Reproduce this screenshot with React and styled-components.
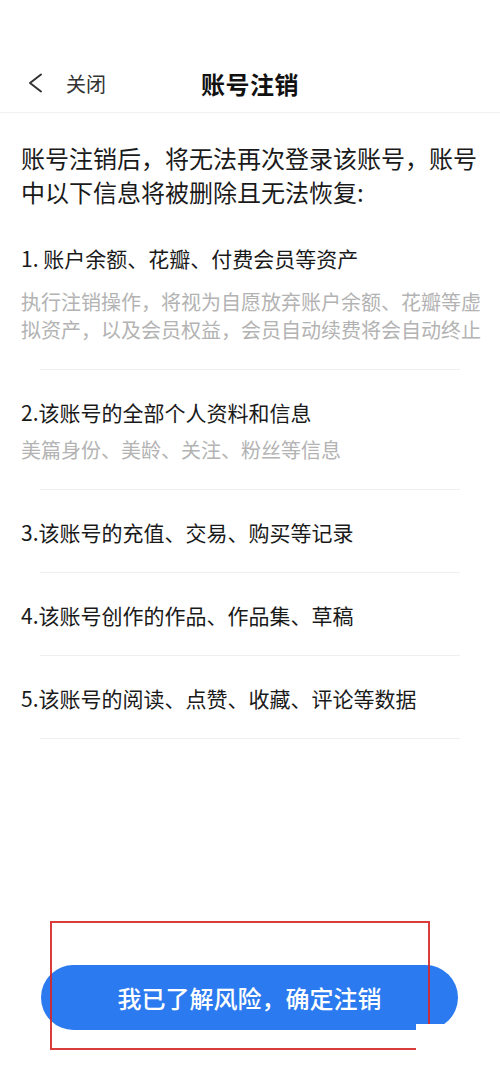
import React from "react"
import styled, { createGlobalStyle } from "styled-components"

const GlobalStyle = createGlobalStyle`
  html, body {
    margin: 0;
    padding: 0;
    background: #fff;
  }
  body {
    font-family: "Noto Sans CJK SC", "Noto Sans", sans-serif;
    color: #222;
  }
`

const Page = styled.div`
  position: relative;
  width: 500px;
  height: 1084px;
  padding-top: 54px;
  box-sizing: border-box;
  display: flex;
  flex-direction: column;
  overflow: hidden;
`

const Header = styled.header`
  height: 58px;
  display: grid;
  grid-template-columns: 1fr auto 1fr;
  align-items: center;
  border-bottom: 1px solid #f1f1f1;
`

const Back = styled.div`
  display: flex;
  align-items: center;
  gap: 22px;
  padding-left: 28px;
  font-size: 20px;
  color: #333;
`

const Title = styled.h1`
  margin: 0;
  font-size: 24px;
  font-weight: 700;
  color: #111;
  letter-spacing: 0.5px;
`

const Intro = styled.p`
  margin: 28px 18px 34px 21px;
  font-size: 24px;
  line-height: 34px;
  color: #1a1a1a;
`

const Item = styled.section`
  padding: ${p => (p.first ? "0" : "27px")} 18px 25px 21px;
`

const ItemTitle = styled.div`
  font-size: 21px;
  line-height: 30px;
  color: #1a1a1a;
`

const ItemDesc = styled.div`
  margin-top: ${p => p.gap}px;
  font-size: 20px;
  line-height: 28px;
  color: #b3b3b3;
`

const Divider = styled.div`
  height: 1px;
  margin: 0 40px;
  background: #efefef;
`

const Footer = styled.footer`
  position: relative;
  margin-top: auto;
  padding: 0 42px 54px 41px;
`

const Confirm = styled.button`
  width: 100%;
  height: 65px;
  border: none;
  border-radius: 33px;
  background: #2b7af0;
  color: #fff;
  font-family: inherit;
  font-size: 24px;
  font-weight: 500;
`

const Frame = styled.div`
  position: absolute;
  left: 50px;
  top: -44px;
  width: 380px;
  height: 129px;
  box-sizing: border-box;
  border: 2px solid rgba(214, 38, 38, 0.9);
  pointer-events: none;
`

const Patch = styled.div`
  position: absolute;
  left: 416px;
  top: 59px;
  width: 32px;
  height: 40px;
  background: #fff;
`

const items = [
  {
    title: "1. 账户余额、花瓣、付费会员等资产",
    desc: "执行注销操作，将视为自愿放弃账户余额、花瓣等虚拟资产，以及会员权益，会员自动续费将会自动终止",
    gap: 15,
  },
  {
    title: "2.该账号的全部个人资料和信息",
    desc: "美篇身份、美龄、关注、粉丝等信息",
    gap: 9,
  },
  { title: "3.该账号的充值、交易、购买等记录" },
  { title: "4.该账号创作的作品、作品集、草稿" },
  { title: "5.该账号的阅读、点赞、收藏、评论等数据" },
]

export default function App() {
  return (
    <Page>
      <GlobalStyle />
      <Header>
        <Back>
          <svg width="16" height="20" viewBox="0 0 16 20" fill="none">
            <polyline points="13,1.5 2,10 13,18.5" stroke="#333" strokeWidth="2" strokeLinecap="round" strokeLinejoin="round" />
          </svg>
          <span>关闭</span>
        </Back>
        <Title>账号注销</Title>
        <div />
      </Header>

      <Intro>账号注销后，将无法再次登录该账号，账号中以下信息将被删除且无法恢复:</Intro>

      {items.map((it, i) => (
        <React.Fragment key={i}>
          <Item first={i === 0}>
            <ItemTitle>{it.title}</ItemTitle>
            {it.desc && <ItemDesc gap={it.gap}>{it.desc}</ItemDesc>}
          </Item>
          <Divider />
        </React.Fragment>
      ))}

      <Footer>
        <Confirm>我已了解风险，确定注销</Confirm>
        <Frame />
        <Patch />
      </Footer>
    </Page>
  )
}
